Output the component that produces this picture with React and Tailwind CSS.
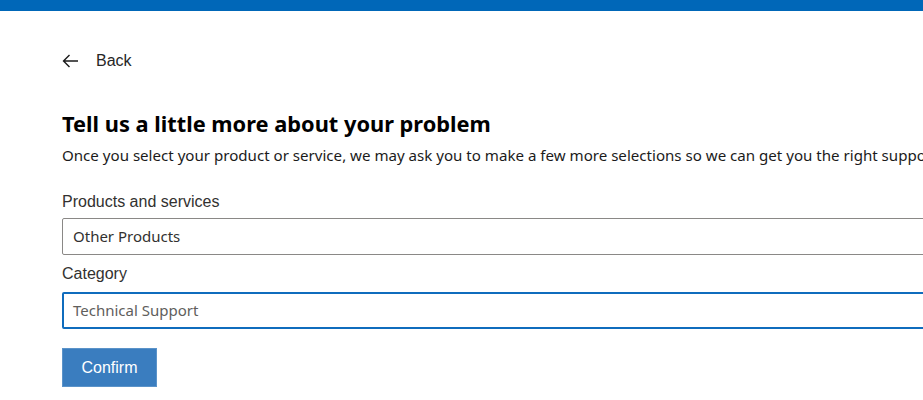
export default function App() {
  return (
    <div className="w-[923px] h-[400px] overflow-hidden bg-white text-[#323130]">
      <div className="h-[11px] bg-[#0067b8]" />
      <div className="pl-[62px] w-[1100px]">
        <button className="mt-[39px] flex items-center gap-[17px] h-[22px]">
          <svg width="17" height="14" viewBox="0 0 17 14" fill="none" stroke="#1b1b1b" strokeWidth="1.4">
            <path d="M16 7H1.5M7.5 1L1.5 7l6 6" />
          </svg>
          <span className="text-[16px] font-['Liberation_Sans',Arial,sans-serif] text-[#262626]">Back</span>
        </button>
        <h1 className="mt-[37px] text-[21.8px] leading-[30px] font-bold font-['Noto_Sans',sans-serif] text-black">
          Tell us a little more about your problem
        </h1>
        <p className="mt-[6px] text-[15.1px] leading-[20px] font-['Noto_Sans',sans-serif] text-[#1b1b1b] whitespace-nowrap">
          Once you select your product or service, we may ask you to make a few more selections so we can get you the right support.
        </p>
        <form className="mt-[26px] flex flex-col font-['Liberation_Sans',Arial,sans-serif]">
          <label className="text-[16px] leading-[22px] text-[#323130]">Products and services</label>
          <div className="mt-[5px] h-[37px] border border-[#8a8886] rounded-[2px] flex items-center pl-[10px] text-[15px] font-['Noto_Sans',sans-serif] text-[#323130]">
            Other Products
          </div>
          <label className="mt-[8px] text-[16px] leading-[22px] text-[#323130]">Category</label>
          <div className="mt-[7px] h-[37px] border-2 border-[#0f6cbd] rounded-[2px] flex items-center pl-[9px] text-[15px] font-['Noto_Sans',sans-serif] text-[#605e5c]">
            Technical Support
          </div>
          <div className="mt-[19px]">
            <button type="button" className="w-[95px] h-[39px] bg-[#3a7dbf] border border-[#5b93c9] text-white text-[16px]">
              Confirm
            </button>
          </div>
        </form>
      </div>
    </div>
  );
}
